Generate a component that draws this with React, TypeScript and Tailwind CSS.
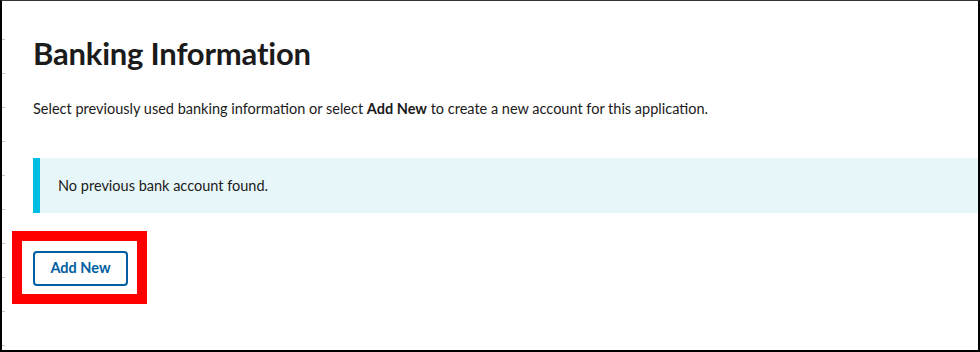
import React from 'react';

const ticks = Array.from({ length: 10 }, (_, i) => i);

const App: React.FC = () => {
  return (
    <div className="relative w-[980px] h-[352px] bg-white border-t border-t-[#333] border-l-2 border-r-2 border-b-2 border-black overflow-hidden font-['Lato','Liberation_Sans',sans-serif] text-[#1b1b1b]">
      {/* tick marks down the left edge */}
      <div className="absolute left-0 top-0 flex flex-col pt-[38px] gap-[33px]">
        {ticks.map((t) => (
          <span key={t} className="block w-[3px] h-px bg-[#c8c8c8]"></span>
        ))}
      </div>

      <div className="pl-[31px] pt-[32px]">
        <h1 className="text-[31px] leading-[40px] font-bold tracking-[-0.2px]">Banking Information</h1>

        <p className="mt-[24px] text-[14.5px] leading-[24px]">
          Select previously used banking information or select <strong className="font-bold">Add New</strong> to create a new account for this application.
        </p>

        <div className="mt-[37px] flex items-center h-[55px] bg-[#e7f6f8] border-l-[7px] border-[#00bde3] pl-[18px]">
          <span className="text-[14.5px]">No previous bank account found.</span>
        </div>

        <div className="mt-[38px]">
          <button className="h-[35px] w-[95px] border-2 border-[#005ea2] rounded-[4px] text-[#005ea2] text-[14.5px] font-bold leading-none bg-white">
            Add New
          </button>
        </div>
      </div>

      {/* red highlight annotation around the button */}
      <div className="absolute left-[10px] top-[230px] w-[135px] h-[73px] border-[10px] border-[#ff0000] pointer-events-none"></div>
    </div>
  );
};

export default App;
